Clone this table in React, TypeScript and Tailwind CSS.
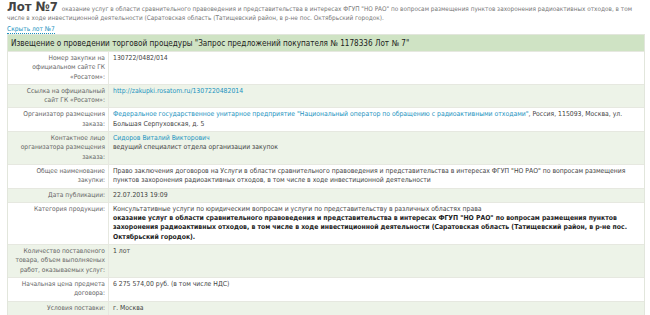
import React from 'react';

type Row = {
  label: React.ReactNode;
  value: React.ReactNode;
};

const link = 'text-[#1b93c0]';

const rows: Row[] = [
  {
    label: 'Номер закупки на официальном сайте ГК «Росатом»:',
    value: '130722/0482/014',
  },
  {
    label: 'Ссылка на официальный сайт ГК «Росатом»:',
    value: <span className={link}>http://zakupki.rosatom.ru/1307220482014</span>,
  },
  {
    label: 'Организатор размещения заказа:',
    value: (
      <>
        <span className={link}>
          Федеральное государственное унитарное предприятие "Национальный оператор по обращению с радиоактивными отходами"
        </span>
        , Россия, 115093, Москва, ул. Большая Серпуховская, д. 5
      </>
    ),
  },
  {
    label: 'Контактное лицо организатора размещения заказа:',
    value: (
      <>
        <span className={link}>Сидоров Виталий Викторович</span>
        <br />
        ведущий специалист отдела организации закупок
      </>
    ),
  },
  {
    label: 'Общее наименование закупки:',
    value:
      'Право заключения договоров на Услуги в области сравнительного правоведения и представительства в интересах ФГУП "НО РАО" по вопросам размещения пунктов захоронения радиоактивных отходов, в том числе в ходе инвестиционной деятельности',
  },
  { label: 'Дата публикации:', value: '22.07.2013 19:09' },
  {
    label: 'Категория продукции:',
    value: (
      <>
        Консультативные услуги по юридическим вопросам и услуги по представительству в различных областях права
        <br />
        <b className="text-[#222]">
          оказание услуг в области сравнительного правоведения и представительства в интересах ФГУП "НО РАО" по вопросам
          размещения пунктов захоронения радиоактивных отходов, в том числе в ходе инвестиционной деятельности (Саратовская
          область (Татищевский район, в р-не пос. Октябрьский городок).
        </b>
      </>
    ),
  },
  {
    label: 'Количество поставленого товара, объем выполняеных работ, оказываемых услуг:',
    value: '1 лот',
  },
  {
    label: 'Начальная цена предмета договора:',
    value: '6 275 574,00 руб. (в том числе НДС)',
  },
  { label: 'Условия поставки:', value: 'г. Москва' },
];

export default function App() {
  return (
    <div
      className="w-[650px] h-[315px] overflow-hidden bg-white px-[7px] text-[#555]"
      style={{ fontFamily: '"DejaVu Sans Condensed", "DejaVu Sans", Verdana, sans-serif' }}
    >
      <div className="pt-[3px] pr-[4px] text-[6.4px] leading-[8.5px] text-[#777]">
        <span className="mr-[4px] text-[13px] font-bold leading-[8.5px] text-[#444]">Лот №7</span>
        оказание услуг в области сравнительного правоведения и представительства в интересах ФГУП "НО РАО" по вопросам
        размещения пунктов захоронения радиоактивных отходов, в том числе в ходе инвестиционной деятельности (Саратовская
        область (Татищевский район, в р-не пос. Октябрьский городок).
      </div>

      <div className="mt-[2px] h-[10px] text-[6.6px] leading-[10px]">
        <span className="text-[#1b93c0] border-b border-dotted border-[#1b93c0]">Скрыть лот №7</span>
      </div>

      <div className="w-[638px] border border-[#e2e6dc]">
        <div className="h-[16px] bg-[#cfe3c4] pl-[3px] text-[8.1px] leading-[16px] text-[#222]">
          Извещение о проведении торговой процедуры "Запрос предложений покупателя № 1178336 Лот № 7"
        </div>
        {rows.map((row, i) => (
          <div
            key={i}
            className={`flex border-t border-[#e6e8e0] leading-[9.3px] ${
              i % 2 === 1 ? 'bg-[#edf3e8]' : 'bg-white'
            }`}
          >
            <div className="w-[101px] shrink-0 border-r border-[#e6e8e0] py-[2px] pl-[6px] pr-[3px] text-right text-[6.6px] text-[#666]">
              {row.label}
            </div>
            <div className="flex-1 py-[2px] pl-[4px] pr-[10px] text-[6.8px] text-[#444]">{row.value}</div>
          </div>
        ))}
      </div>
    </div>
  );
}
